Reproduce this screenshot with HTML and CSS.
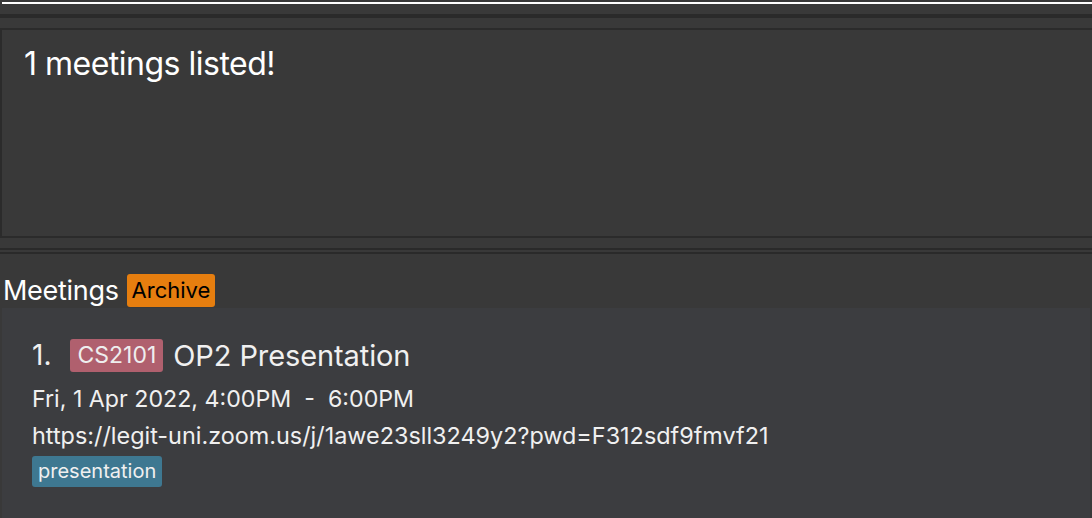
FILE: index.html
```html
<!DOCTYPE html>
<html>
<head>
<meta charset="utf-8">
<link rel="stylesheet" href="styles.css">
</head>
<body>
<div class="top-strip"><div class="white-line"></div></div>
<div class="divider thick"></div>
<div class="spacer-10"></div>
<div class="result"><span class="result-text">1 meetings listed!</span></div>
<div class="spacer-10"></div>
<div class="divider thin"></div>
<div class="spacer-2"></div>
<div class="divider thin"></div>
<div class="list-header">
  <span class="list-title">Meetings</span>
  <span class="archive">Archive</span>
</div>
<div class="card">
  <div class="title-row">
    <span class="index">1.</span>
    <span class="module">CS2101</span>
    <span class="name">OP2 Presentation</span>
  </div>
  <div class="time">Fri, 1 Apr 2022, 4:00PM&nbsp; - &nbsp;6:00PM</div>
  <div class="url">https://legit-uni.zoom.us/j/1awe23sll3249y2?pwd=F312sdf9fmvf21</div>
  <div class="tags"><span class="tag">presentation</span></div>
</div>
</body>
</html>
```

FILE: styles.css
```css
* { box-sizing: border-box; }
html, body {
  margin: 0;
  padding: 0;
  background: #393939;
  font-family: Inter, "Noto Sans", sans-serif;
  overflow: hidden;
  height: 518px;
}
.top-strip {
  height: 14px;
  padding-top: 2px;
}
.white-line {
  height: 2px;
  margin-left: 2px;
  background: #ffffff;
}
.divider { background: #2a2a2a; }
.divider.thick { height: 4px; }
.divider.thin { height: 2px; }
.spacer-10 { height: 10px; }
.spacer-2 { height: 2px; }
.result {
  height: 210px;
  border: 2px solid #2b2b2b;
  border-right: none;
  padding: 14px 0 0 22px;
}
.result-text {
  color: #ffffff;
  font-size: 32px;
  letter-spacing: -0.5px;
}
.list-header {
  height: 54px;
  display: flex;
  align-items: flex-end;
  padding-left: 3px;
  gap: 8px;
}
.list-title {
  color: #ffffff;
  font-size: 27px;
  line-height: 34px;
  letter-spacing: -0.3px;
}
.archive {
  background: #e67e0f;
  color: #000000;
  font-size: 22px;
  line-height: 33px;
  height: 33px;
  padding: 0 5px;
  border-radius: 3px;
  margin-bottom: 1px;
}
.card {
  margin: 0 2px;
  height: 210px;
  background: #3c3d40;
  padding: 30px 0 0 30px;
  color: #f0f0f0;
}
.title-row {
  display: flex;
  align-items: center;
  height: 34px;
}
.index {
  font-size: 28px;
  margin-right: 19px;
}
.module {
  background: #b0606e;
  color: #eeeeee;
  font-size: 23px;
  line-height: 33px;
  padding: 0 7px;
  border-radius: 3px;
  margin-right: 10px;
}
.name {
  font-size: 29px;
  letter-spacing: -0.1px;
}
.time {
  margin-top: 12px;
  font-size: 23.2px;
  line-height: 30px;
}
.url {
  margin-top: 7px;
  font-size: 23.4px;
  line-height: 30px;
}
.tags {
  margin-top: 5px;
  display: flex;
}
.tag {
  background: #3e7891;
  color: #f0f0f0;
  font-size: 20px;
  line-height: 31px;
  padding: 0 6px;
  border-radius: 3px;
}
```
